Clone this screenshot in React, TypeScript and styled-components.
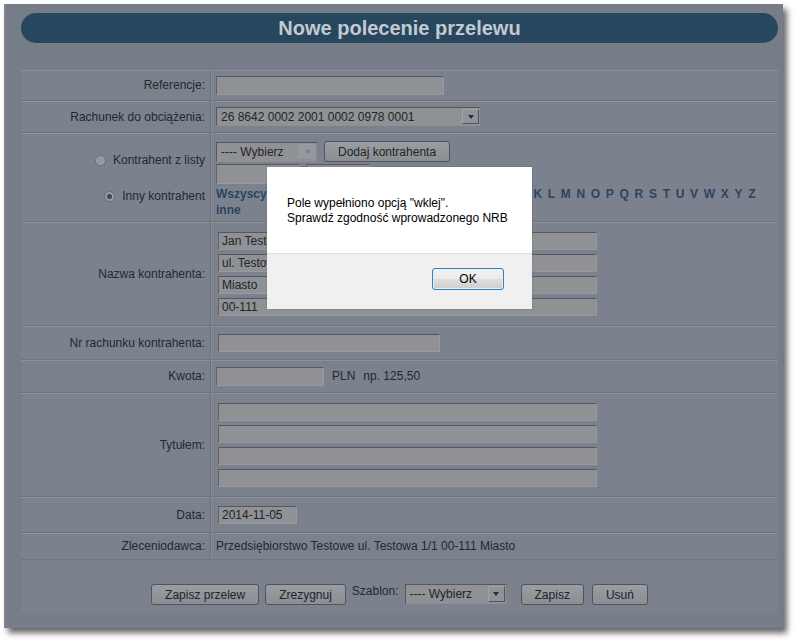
import * as React from 'react';
import styled, { createGlobalStyle, css } from 'styled-components';

const GlobalStyle = createGlobalStyle`
  html, body {
    margin: 0;
    padding: 0;
    background: #ffffff;
  }
  body {
    font-family: 'Liberation Sans', Arial, sans-serif;
    font-size: 12px;
    color: #25282c;
  }
`;

const Page = styled.div`
  position: relative;
  width: 798px;
  height: 644px;
  padding: 4px 0 0 4px;
  box-sizing: border-box;
`;

const Frame = styled.div`
  width: 779px;
  height: 624px;
  box-sizing: border-box;
  padding: 9px 5px 0 16px;
  background: #767d88;
  border-left: 1px solid #858b94;
  box-shadow: 4px 5px 6px rgba(0, 0, 0, 0.6);
`;

const TitleBar = styled.div`
  height: 30px;
  border-radius: 15px;
  background: #27475f;
  display: flex;
  align-items: center;
  justify-content: center;
  color: #c4c9cf;
  font-size: 20px;
  font-weight: bold;
`;

const Panel = styled.div`
  margin-top: 27px;
  height: 543px;
  background: #7b828d;
  display: flex;
  flex-direction: column;
`;

const Row = styled.div<{ $h: number }>`
  height: ${(p) => p.$h}px;
  box-sizing: border-box;
  display: grid;
  grid-template-columns: 190px 1fr;
  border-bottom: 1px solid #6e747d;
  box-shadow: inset 0 1px 0 #8c929a;
`;

const Label = styled.div`
  display: flex;
  align-items: center;
  justify-content: flex-end;
  padding-right: 5px;
  border-right: 1px solid #6e747d;
  box-shadow: 1px 0 0 #8a9098;
  white-space: nowrap;
`;

const StackLabel = styled(Label)`
  flex-direction: column;
  align-items: flex-end;
  justify-content: flex-start;
  padding-top: 20px;
  gap: 22px;
`;

const Cell = styled.div<{ $column?: boolean }>`
  display: flex;
  align-items: center;
  padding-left: 5px;
  gap: 8px;
  ${(p) =>
    p.$column &&
    css`
      flex-direction: column;
      align-items: flex-start;
      justify-content: center;
      gap: 4px;
    `}
`;

const PartnerCell = styled.div`
  display: flex;
  flex-direction: column;
  align-items: flex-start;
  padding: 8px 0 0 5px;
  gap: 2px;
`;

const Input = styled.div<{ $w: number; $h?: number; $shift?: boolean }>`
  width: ${(p) => p.$w}px;
  height: ${(p) => p.$h ?? 18}px;
  box-sizing: border-box;
  margin-left: ${(p) => (p.$shift ? 2 : 0)}px;
  background: #8f9195;
  border-top: 1px solid #55585c;
  border-left: 1px solid #606367;
  border-right: 1px solid #979a9e;
  border-bottom: 1px solid #979a9e;
  padding: 0 3px;
  display: flex;
  align-items: center;
  color: #222428;
  font-size: 12px;
  white-space: nowrap;
  overflow: hidden;
`;

const Select = styled.div<{ $w: number; $h?: number }>`
  width: ${(p) => p.$w}px;
  height: ${(p) => p.$h ?? 20}px;
  box-sizing: border-box;
  background: #8f9195;
  border: 1px solid #55585c;
  border-right-color: #7d8084;
  border-bottom-color: #8d9094;
  display: flex;
  align-items: center;
  padding-left: 4px;
  color: #222428;
  white-space: nowrap;
`;

const SelectText = styled.span`
  flex: 1;
`;

const ArrowBox = styled.span<{ $disabled?: boolean }>`
  width: 17px;
  height: calc(100% - 2px);
  margin-right: 1px;
  box-sizing: border-box;
  border: 1px solid ${(p) => (p.$disabled ? '#8a8d91' : '#505357')};
  border-top-color: ${(p) => (p.$disabled ? '#9a9da1' : '#a3a6aa')};
  border-left-color: ${(p) => (p.$disabled ? '#9a9da1' : '#a3a6aa')};
  background: ${(p) => (p.$disabled ? '#95989c' : '#909397')};
  display: flex;
  align-items: center;
  justify-content: center;
  &::after {
    content: '';
    border-left: 3px solid transparent;
    border-right: 3px solid transparent;
    border-top: 4px solid ${(p) => (p.$disabled ? '#7c7f84' : '#2a2c30')};
  }
`;

const Button = styled.div<{ $ml?: number }>`
  height: 21px;
  box-sizing: border-box;
  padding: 0 13px;
  margin-left: ${(p) => p.$ml ?? 0}px;
  border: 1px solid #505357;
  border-radius: 3px;
  background: linear-gradient(#9a9da1, #8a8d91);
  display: flex;
  align-items: center;
  color: #222428;
  white-space: nowrap;
`;

const Line = styled.div<{ $gap?: number }>`
  display: flex;
  align-items: center;
  gap: ${(p) => p.$gap ?? 6}px;
`;

const RadioLabel = styled.span`
  display: flex;
  align-items: center;
  gap: 7px;
  line-height: 14px;
`;

const Radio = styled.span<{ $checked?: boolean }>`
  width: 11px;
  height: 11px;
  box-sizing: border-box;
  border-radius: 50%;
  border: 1px solid #6a6f76;
  background: radial-gradient(circle, #8e9298 0%, #a4a7ab 100%);
  position: relative;
  ${(p) =>
    p.$checked &&
    css`
      &::after {
        content: '';
        position: absolute;
        left: 2px;
        top: 2px;
        width: 5px;
        height: 5px;
        border-radius: 50%;
        background: #2d4f57;
      }
    `}
`;

const Letters = styled.div`
  width: 545px;
  margin-top: 1px;
  display: flex;
  flex-wrap: wrap;
  column-gap: 5.7px;
  row-gap: 2px;
  font-weight: bold;
  color: #2b4562;
  line-height: 14px;
`;

const AllLink = styled.span`
  margin-right: 261px;
`;

const ButtonsRow = styled.div`
  flex: 1;
  display: flex;
  justify-content: center;
  align-items: flex-start;
  padding-top: 24px;
  gap: 6px;
`;

const Plain = styled.span<{ $ml?: number }>`
  margin-left: ${(p) => p.$ml ?? 0}px;
  white-space: nowrap;
`;

const Dialog = styled.div`
  position: absolute;
  left: 267px;
  top: 167px;
  width: 265px;
  height: 142px;
  background: #ffffff;
  display: flex;
  flex-direction: column;
  box-shadow: 0 0 1px rgba(0, 0, 0, 0.4);
`;

const DialogBody = styled.div`
  height: 86px;
  box-sizing: border-box;
  padding: 29px 0 0 20px;
  color: #000;
  font-size: 12px;
  line-height: 15px;
`;

const DialogFooter = styled.div`
  flex: 1;
  background: #f0f0f0;
  border-top: 1px solid #dfdfdf;
  display: flex;
  justify-content: flex-end;
  align-items: flex-start;
  padding: 14px 28px 0 0;
`;

const OkButton = styled.div`
  width: 72px;
  height: 22px;
  box-sizing: border-box;
  border: 1px solid #3c7fb1;
  border-radius: 3px;
  background: linear-gradient(#f2f2f2 0%, #ebebeb 50%, #dddddd 51%, #cfcfcf 100%);
  box-shadow: inset 0 0 0 1px #dff1fb;
  display: flex;
  align-items: center;
  justify-content: center;
  color: #000;
  font-size: 12px;
`;

const letters = 'KLMNOPQRSTUVWXYZ'.split('');

export default function App() {
  return (
    <Page>
      <GlobalStyle />
      <Frame>
        <TitleBar>Nowe polecenie przelewu</TitleBar>
        <Panel>
          <Row $h={31}>
            <Label>Referencje:</Label>
            <Cell>
              <Input $w={228} $h={19} />
            </Cell>
          </Row>
          <Row $h={32}>
            <Label>Rachunek do obciążenia:</Label>
            <Cell>
              <Select $w={265} $h={19}>
                <SelectText>26 8642 0002 2001 0002 0978 0001</SelectText>
                <ArrowBox />
              </Select>
            </Cell>
          </Row>
          <Row $h={89}>
            <StackLabel>
              <RadioLabel>
                <Radio />
                Kontrahent z listy
              </RadioLabel>
              <RadioLabel>
                <Radio $checked />
                Inny kontrahent
              </RadioLabel>
            </StackLabel>
            <PartnerCell>
              <Line>
                <Select $w={102}>
                  <SelectText>---- Wybierz</SelectText>
                  <ArrowBox $disabled />
                </Select>
                <Button>Dodaj kontrahenta</Button>
              </Line>
              <Line>
                <Input $w={84} $h={20} />
                <Input $w={64} $h={20} />
              </Line>
              <Letters>
                <AllLink>Wszyscy</AllLink>
                {letters.map((l) => (
                  <span key={l}>{l}</span>
                ))}
                <span>inne</span>
              </Letters>
            </PartnerCell>
          </Row>
          <Row $h={104}>
            <Label>Nazwa kontrahenta:</Label>
            <Cell $column>
              <Input $w={379} $shift>Jan Testowy</Input>
              <Input $w={379} $shift>ul. Testowa 1</Input>
              <Input $w={379} $shift>Miasto</Input>
              <Input $w={379} $shift>00-111</Input>
            </Cell>
          </Row>
          <Row $h={34}>
            <Label>Nr rachunku kontrahenta:</Label>
            <Cell>
              <Input $w={222} $shift />
            </Cell>
          </Row>
          <Row $h={33}>
            <Label>Kwota:</Label>
            <Cell>
              <Input $w={108} $h={19} />
              <Plain>PLN</Plain>
              <Plain>np. 125,50</Plain>
            </Cell>
          </Row>
          <Row $h={104}>
            <Label>Tytułem:</Label>
            <Cell $column>
              <Input $w={379} $shift />
              <Input $w={379} $shift />
              <Input $w={379} $shift />
              <Input $w={379} $shift />
            </Cell>
          </Row>
          <Row $h={36}>
            <Label>Data:</Label>
            <Cell>
              <Input $w={79} $shift>2014-11-05</Input>
            </Cell>
          </Row>
          <Row $h={27}>
            <Label>Zleceniodawca:</Label>
            <Cell>
              <Plain>Przedsiębiorstwo Testowe ul. Testowa 1/1 00-111 Miasto</Plain>
            </Cell>
          </Row>
          <ButtonsRow>
            <Button>Zapisz przelew</Button>
            <Button>Zrezygnuj</Button>
            <Plain>Szablon:</Plain>
            <Select $w={102}>
              <SelectText>---- Wybierz</SelectText>
              <ArrowBox />
            </Select>
            <Button $ml={8}>Zapisz</Button>
            <Button $ml={2}>Usuń</Button>
          </ButtonsRow>
        </Panel>
      </Frame>
      <Dialog>
        <DialogBody>
          Pole wypełniono opcją "wklej".
          <br />
          Sprawdź zgodność wprowadzonego NRB
        </DialogBody>
        <DialogFooter>
          <OkButton>OK</OkButton>
        </DialogFooter>
      </Dialog>
    </Page>
  );
}
